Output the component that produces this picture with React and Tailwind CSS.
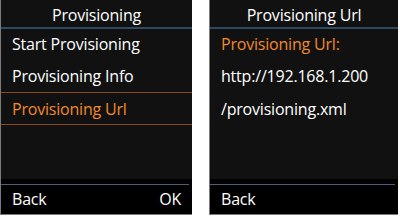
import React from "react";

const font = { fontFamily: '"Open Sans", "Noto Sans", sans-serif' };

function Screen({ title, children, footer, className }) {
  return (
    <div className={"flex flex-col h-[215px] bg-[#111111] border-l border-b border-[#7a7a7a] " + className}>
      <div className="h-[27px] flex items-center justify-center text-[16px] tracking-[-0.2px] text-white leading-none pt-[2px]">{title}</div>
      <div className="h-[2px] bg-[#2e4a60]" />
      <div className="flex-1 flex flex-col">{children}</div>
      <div className="h-[35px] bg-black flex flex-col">
        <div className="h-[5px]" />
        <div className="h-px bg-[#4a6078] mr-[3px]" />
        <div className="flex-1 flex items-center justify-between px-[11px] text-[16px] tracking-[-0.2px] text-white leading-none pb-[2px]">
          {footer}
        </div>
      </div>
    </div>
  );
}

const row = "flex items-center px-[11px] text-[16px] tracking-[-0.2px] leading-none";

export default function App() {
  return (
    <div className="w-[400px] h-[219px] bg-white flex gap-[17px]" style={font}>
      <Screen
        title="Provisioning"
        className="w-[192px]"
        footer={<><span>Back</span><span>OK</span></>}
      >
        <div className={"h-[29px] text-white " + row}>Start Provisioning</div>
        <div className={"h-[34px] pt-[2px] text-white " + row}>Provisioning Info</div>
        <div className="h-px bg-[#8a4a1c]" />
        <div className={"h-[31px] text-[#f28a2e] " + row}>Provisioning Url</div>
        <div className="h-px bg-[#8a4a1c]" />
      </Screen>
      <Screen
        title="Provisioning Url"
        className="w-[189px]"
        footer={<span>Back</span>}
      >
        <div className={"h-[29px] text-[#f28a2e] " + row}>Provisioning Url:</div>
        <div className={"h-[34px] pt-[2px] text-white " + row}>http://192.168.1.200</div>
        <div className={"h-[33px] text-white " + row}>/provisioning.xml</div>
      </Screen>
    </div>
  );
}
